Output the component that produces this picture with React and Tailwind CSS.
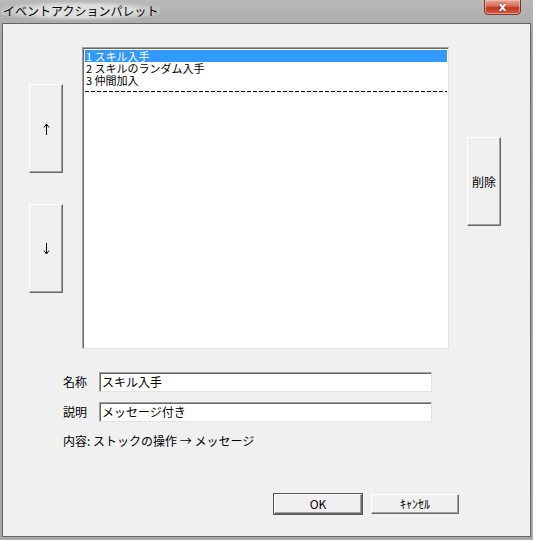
import React from "react";

const font = { fontFamily: '"MS UI Gothic", "Noto Sans CJK JP", sans-serif' };

function Btn({ className = "", children, def = false }) {
  return (
    <div
      className={
        "flex items-center justify-center bg-[#f0f0f0] text-[12px] leading-none text-black border-t border-l border-t-white border-l-white border-r border-b border-r-[#696969] border-b-[#696969] shadow-[inset_-1px_-1px_0_#a0a0a0] " +
        (def ? "outline outline-1 outline-[#555] " : "") +
        className
      }
    >
      {children}
    </div>
  );
}

function Arrow({ down = false }) {
  return (
    <svg width="7" height="12" viewBox="0 0 7 12" className={down ? "rotate-180" : ""}>
      <path d="M3.5 1.5 V12" stroke="#000" strokeWidth="1" fill="none" />
      <path d="M1 4.5 L3.5 1 L6 4.5" stroke="#000" strokeWidth="1" fill="none" />
    </svg>
  );
}

export default function App() {
  return (
    <div
      className="w-[533px] h-[540px] overflow-hidden bg-[linear-gradient(to_bottom,#b9b9b9,#a4a4a4_40px,#a8a8a8)]"
      style={font}
    >
      {/* title bar */}
      <div className="h-[23px] flex items-start justify-between">
        <span className="mt-[2px] ml-[1px] px-[2px] text-[12px] leading-[18px] text-black bg-[radial-gradient(ellipse_at_center,#dedede_45%,rgba(200,200,200,0)_80%)]">
          イベントアクションパレット
        </span>
        <div className="mr-[12px] w-[37px] h-[16px] -mt-[1px] rounded-b-[4px] border border-[#6e3a32] bg-[linear-gradient(to_bottom,#e9a99c,#d36a55_45%,#c0361e_55%,#d45c3f)] flex items-center justify-center shadow-[inset_0_0_0_1px_rgba(255,200,190,0.6)]">
          <span className="text-white font-bold text-[12px] leading-none [text-shadow:0_0_2px_#5a1b10]" style={{ fontFamily: '"DejaVu Sans", sans-serif' }}>x</span>
        </div>
      </div>

      {/* client */}
      <div className="ml-[2px] w-[529px] h-[514px] border border-[#646464] bg-[#f0f0f0] pt-[23px]">
        <div className="flex items-start">
          <div className="ml-[26px] mt-[37px] flex flex-col gap-[31px]">
            <Btn className="w-[34px] h-[89px]">
              <Arrow />
            </Btn>
            <Btn className="w-[34px] h-[89px]">
              <Arrow down />
            </Btn>
          </div>
          <div className="ml-[19px] w-[367px] h-[302px] bg-white border border-t-[#a0a0a0] border-l-[#a0a0a0] border-r-[#e3e3e3] border-b-[#e3e3e3] shadow-[inset_1px_1px_0_#696969] pt-[2px] pl-[2px] pr-[1px] text-[11px] leading-[12px] text-black">
            <div className="h-[12px] bg-[#3399ff] text-white whitespace-nowrap pl-[1px]">1 スキル入手</div>
            <div className="h-[12px] whitespace-nowrap pl-[1px]">2 スキルのランダム入手</div>
            <div className="h-[12px] whitespace-nowrap pl-[1px]">3 仲間加入</div>
            <div className="mt-[5px] h-[1px] bg-[repeating-linear-gradient(90deg,#000_0_4px,transparent_4px_6px)]"></div>
          </div>
          <div className="ml-[18px] mt-[90px]">
            <Btn className="w-[34px] h-[89px]">削除</Btn>
          </div>
        </div>

        <div className="mt-[23px] ml-[60px] flex flex-col text-[12px] text-black">
          <div className="flex items-center h-[20px]">
            <span className="w-[36px]">名称</span>
            <div className="w-[333px] h-[20px] bg-white border border-t-[#a0a0a0] border-l-[#a0a0a0] border-r-[#e3e3e3] border-b-[#e3e3e3] shadow-[inset_1px_1px_0_#696969] pl-[2px] leading-[17px]">
              スキル入手
            </div>
          </div>
          <div className="flex items-center h-[20px] mt-[10px]">
            <span className="w-[36px]">説明</span>
            <div className="w-[333px] h-[20px] bg-white border border-t-[#a0a0a0] border-l-[#a0a0a0] border-r-[#e3e3e3] border-b-[#e3e3e3] shadow-[inset_1px_1px_0_#696969] pl-[2px] leading-[17px]">
              メッセージ付き
            </div>
          </div>
          <div className="mt-[11px] leading-[16px] whitespace-nowrap">内容: ストックの操作 → メッセージ</div>
        </div>

        <div className="mt-[45px] ml-[271px] flex gap-[9px]">
          <Btn className="w-[88px] h-[20px]" def>OK</Btn>
          <Btn className="w-[88px] h-[20px]">ｷｬﾝｾﾙ</Btn>
        </div>
      </div>
    </div>
  );
}
